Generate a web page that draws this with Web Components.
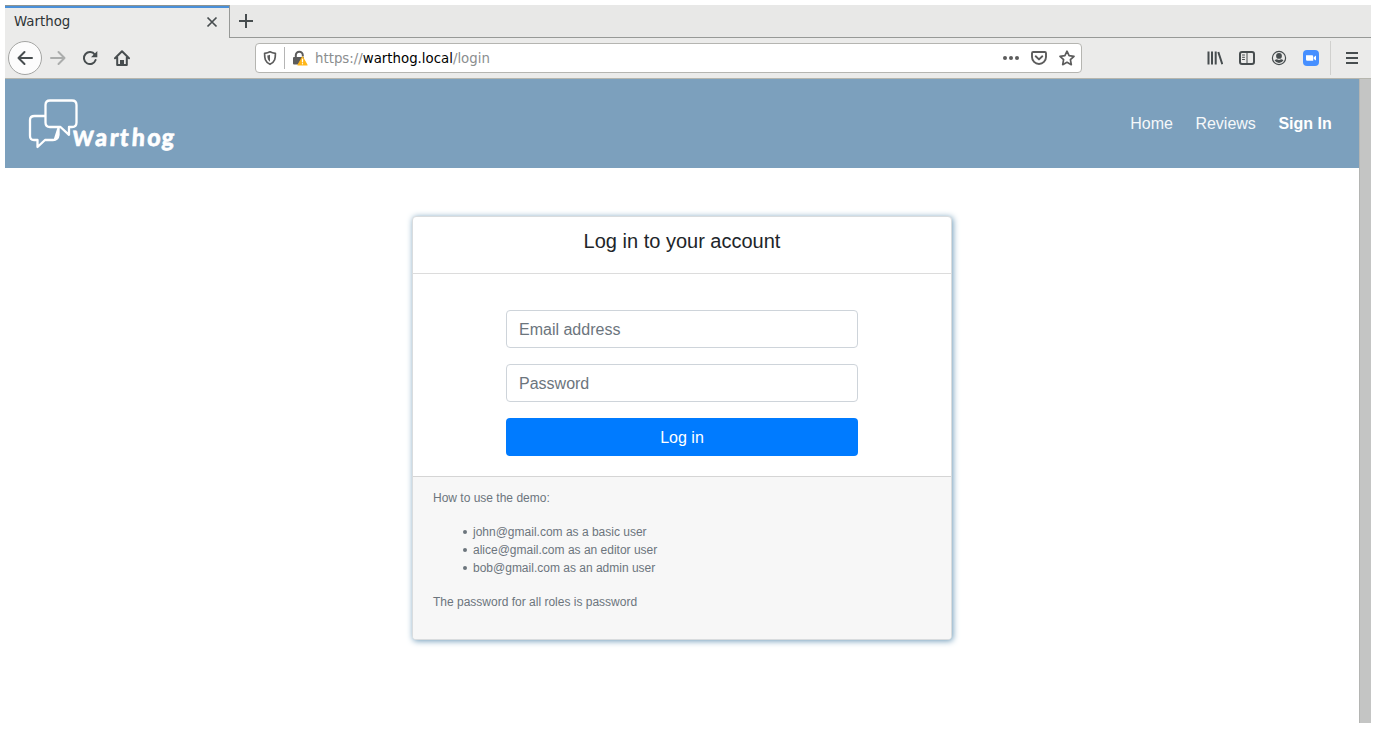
<!DOCTYPE html>
<html lang="en"><head><meta charset="utf-8"><title>Warthog</title>
<style>html,body{margin:0;background:#fff}body{width:1380px;height:732px;overflow:hidden;padding:5px 9px 9px 5px;box-sizing:border-box}</style></head>
<body>
<browser-window>
  <tab-strip slot="tabs">Warthog</tab-strip>
  <browser-toolbar slot="toolbar"></browser-toolbar>
  <site-header slot="page"></site-header>
  <login-card slot="page"></login-card>
</browser-window>
<script>
const define=(name,html)=>customElements.define(name,class extends HTMLElement{
  constructor(){super();const t=document.createElement('template');t.innerHTML=html;this.attachShadow({mode:'open'}).appendChild(t.content.cloneNode(true));}
});
define('browser-window',`<style>
:host{display:grid;grid-template-rows:33px 41px 644px;width:1366px;height:718px}
.view{display:flex;min-height:0}.page{flex:1;background:#fff;display:flex;flex-direction:column;align-items:center}
.scroll{width:11px;background:#c4c5c4;border-left:1px solid #b4b5b3}
</style><slot name="tabs"></slot><slot name="toolbar"></slot><div class="view"><div class="page"><slot name="page"></slot></div><div class="scroll"></div></div>`);
define('tab-strip',`<style>
:host{display:flex;background:#e8e8e7;font:13.33px "DejaVu Sans",sans-serif;color:#2e3436}
.tab{box-sizing:border-box;width:225px;height:33px;border-top:1px solid #8e9491;border-right:1px solid #979997;background:#ebebea;box-shadow:inset 0 2px #4a90d9;display:flex;align-items:center;padding:0 11px 1px 9px;justify-content:space-between}
.rest{flex:1;box-sizing:border-box;border-bottom:1px solid #979997;padding:8px 0 0 8px}
svg{display:block;fill:none;stroke:#474d4f}
</style><div class="tab"><span><slot></slot></span><svg width="12" height="12" stroke-width="1.7" style="margin-top:1px"><path d="M1.5 1.500l9 9m0-9l-9 9"/></svg></div>
<div class="rest"><svg width="16" height="16" stroke-width="2"><path d="M8 1v14M1 8h14"/></svg></div>`);
define('browser-toolbar',`<style>
:host{display:flex;align-items:center;background:#ebebea;border-bottom:1px solid #b6b6ae;height:40px;font:13.33px "DejaVu Sans",sans-serif;color:#8b8e8f}
svg{display:block;flex:none;fill:none;stroke:#474d4f;stroke-width:2;stroke-linecap:round;stroke-linejoin:round}
.back{box-sizing:border-box;width:34px;height:34px;margin-left:3px;border:1px solid #a4a5a3;border-radius:50%;background:#fcfcfc;display:grid;place-items:center}
.nav{display:flex;gap:16px;margin-left:8px}
.url{box-sizing:border-box;width:827px;height:30px;margin-left:125px;border:1px solid #b5b5b1;border-radius:4px;background:#fff;display:flex;align-items:center;padding:0 6px}
.url i{width:1px;height:22px;background:#b5b5b5;margin:0 7px 0 6px}
.text{flex:1;margin-left:7px;white-space:pre}.text b{font-weight:400;color:#000}
.page{display:flex;gap:12px}.page svg,.url>svg{stroke:#5c5c5c}
.tools{display:flex;gap:16px;margin-left:125px}
.sep{width:1px;height:34px;background:#d0d0ce;margin:0 13px 0 11px}
</style>
<div class="back"><svg width="16" height="16"><path d="M15 8H1.5M7.5 2l-6 6 6 6"/></svg></div>
<div class="nav">
<svg width="16" height="16" style="stroke:#abadac"><path d="M1 8h13.5M8.5 2l6 6-6 6"/></svg>
<svg width="16" height="16"><path d="M12.800 4.600A6 6 0 1 0 13.600 10"/><path d="M15.300 1v6.300H9z" fill="#474d4f" stroke="none"/></svg>
<svg width="16" height="16"><path d="M1 8.3L8 1.3l7 7M3.2 7.5V15h9.6V7.5"/><path d="M6 15v-5h4v5" fill="#474d4f" stroke="none"/></svg></div>
<div class="url">
<svg width="16" height="16"><path d="M8 1.8C6 3 4.3 3.2 2.6 3.3c0 5 .2 8.7 5.400 11 5.200-2.300 5.400-6 5.400-11C11.700 3.200 10 3 8 1.800z" stroke-width="1.700"/><path d="M8 4.800C7 5.200 6.200 5.500 5.300 5.600c.1 3 .7 4.700 2.700 6.100z" fill="#5c5c5c" stroke="none"/></svg><i></i>
<svg width="16" height="16"><path d="M3.800 8V5.200a3.500 3.500 0 0 1 7 0V6.500" style="stroke-linecap:butt"/><rect x="1" y="7" width="11" height="7.500" rx="1" fill="#5c5c5c" stroke="none"/><path d="M10.500 7L15 15H6z" fill="#ffb618" stroke="#ffb618" stroke-width="1.200" style="stroke-width:1.200"/><path d="M10.500 9.200v2.600m0 1.900v.1" stroke="#fff" style="stroke:#fff;stroke-width:1.300"/></svg>
<span class="text">https://<b>warthog.local</b>/login</span>
<div class="page"><svg width="16" height="16"><g fill="#5c5c5c" stroke="none"><circle cx="2" cy="8" r="2"/><circle cx="8" cy="8" r="2"/><circle cx="14" cy="8" r="2"/></g></svg>
<svg width="16" height="16"><path d="M2.200 2h11.600q1.200 0 1.200 1.200V7A7 7 0 0 1 1 7V3.200Q1 2 2.200 2zM4.700 6.300L8 9.400l3.300-3.100" stroke-width="1.900"/></svg>
<svg width="16" height="16"><path d="M8 1.200l2.100 4.400 4.900.7-3.600 3.400.9 5L8 12.300l-4.300 2.400.9-5L1 6.300l4.900-.7z" stroke-width="1.700"/></svg></div></div>
<div class="tools">
<svg width="16" height="16"><path d="M1.500 1.500v13M5 1.500v13M8.700 1.500v13M11.300 2l4 12.300" style="stroke-linecap:butt"/></svg>
<svg width="16" height="16"><rect x="1" y="2" width="14" height="12" rx="2"/><path d="M8 2v12M3.500 5h2M3.500 7.300h2M3.500 9.500h2" stroke-width="1" style="stroke-width:1"/></svg>
<svg width="16" height="16"><circle cx="8" cy="8" r="6.600" style="stroke-width:1.200"/><circle cx="8" cy="5.900" r="2.900" fill="#474d4f" style="stroke:none"/><path d="M3.500 10.300Q5 9.300 6 9.300q2 1.200 4 0 1.200 0 2.500 1Q11 13 8 13T3.500 10.300z" fill="#474d4f" style="stroke:none"/></svg>
<svg width="16" height="16"><rect width="16" height="16" rx="4" fill="#468fff" stroke="none"/><path d="M3 5.200h6q1.200 0 1.200 1.200v4.400H4.200Q3 10.800 3 9.600zM10.800 7.200L13 5.500v5l-2.200-1.600z" fill="#fff" stroke="none"/></svg></div>
<div class="sep"></div><svg width="16" height="16"><path d="M2 3h12M2 8h12M2 13h12" style="stroke-linecap:butt"/></svg>`);
define('site-header',`<style>
:host{display:flex;width:100%;height:89px;box-sizing:border-box;background:#7ca0bd;justify-content:space-between;align-items:center;padding:0 27.300px 0 20px;font:16px "Liberation Sans",Arial,sans-serif;color:#f5f8fa}
nav{display:flex;gap:22.500px}b{color:#fff}svg{display:block}
</style><svg width="160" height="60" fill="none" stroke="#fff" stroke-width="2.300" stroke-linejoin="round"><path d="M25 6.500H47Q51.500 6.500 51.500 11V28.500Q51.500 33 47 33H44V40.800L35.500 33H25Q20.500 33 20.500 28.500V11Q20.500 6.500 25 6.500z"/><path d="M20.500 22H9.500Q5 22 5 26V42Q5 46 9 46H12.500V53L20 46H28Q33 46 33.500 41V34L30 45"/><text transform="translate(0 52) skewX(-4) scale(.95 1)" fill="#fff" stroke="#fff" stroke-width=".6" font-family="Lato" font-weight="900" font-size="21" x="49.500 73.500 88.700 99.300 111.800 128.200 143.400">W<tspan font-size="24.500">arthog</tspan></text></svg>
<nav><span>Home</span><span>Reviews</span><b>Sign In</b></nav>`);
define('login-card',`<style>
:host{display:block;box-sizing:border-box;width:540px;height:424px;margin-top:48px;border:1px solid #d9dcde;border-radius:4px;box-shadow:1px 1px 6px #6d9ab8;background:#fff;font:16px/24px "Liberation Sans",Arial,sans-serif;color:#212529;overflow:hidden}
h5{margin:0;box-sizing:border-box;height:57px;padding:12px 0;border-bottom:1px solid #dcdcdc;text-align:center;font-size:20px;font-weight:400;line-height:24px}
form{display:flex;flex-direction:column;gap:16px;padding:36px 93px 20px}
.field{box-sizing:border-box;width:100%;height:38px;padding:7px 12px 5px;border:1px solid #ced4da;border-radius:4px;background:#fff;color:#6c757d}
button{height:38px;border:0;border-radius:4px;background:#007bff;color:#fff;font:inherit;padding:2px 0 0}
footer{border-top:1px solid #d5d5d5;background:#f7f7f7;padding:12px 20px;font-size:12px;line-height:18px;color:#6c757d;height:138px}
ul{margin:16px 0;padding-left:40px;list-style:none}
li{display:flex;align-items:center}
li::before{content:"";width:4.500px;height:4.500px;border-radius:50%;background:#6c757d;margin:0 6px 0 -10.500px}
</style><h5>Log in to your account</h5><form><div class="field">Email address</div><div class="field">Password</div><button type="button">Log in</button></form>
<footer><div>How to use the demo:</div><ul><li>john@gmail.com as a basic user</li><li>alice@gmail.com as an editor user</li><li>bob@gmail.com as an admin user</li></ul><div>The password for all roles is password</div></footer>`);
</script></body></html>
